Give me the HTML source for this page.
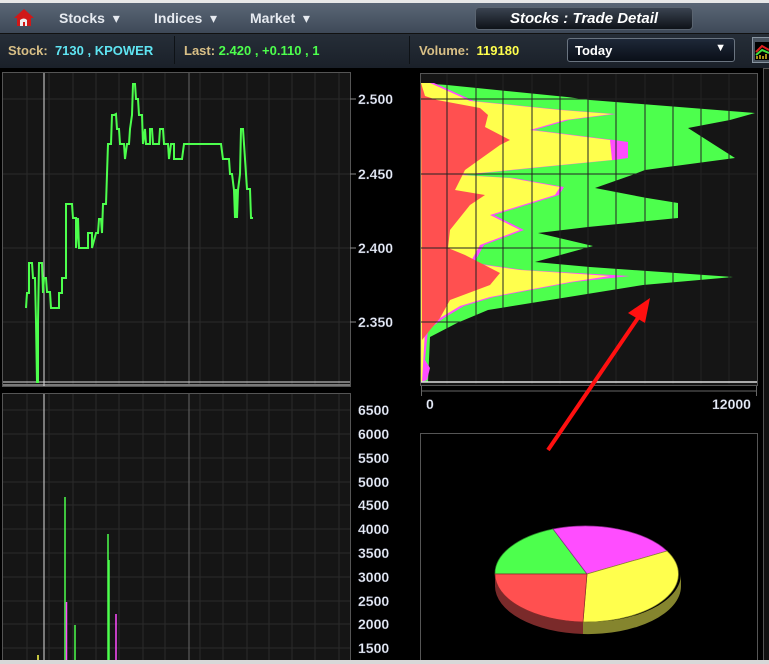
<!DOCTYPE html>
<html><head><meta charset="utf-8"><style>
*{margin:0;padding:0;box-sizing:border-box}
body{width:769px;height:664px;background:#000;position:relative;overflow:hidden;font-family:"Liberation Sans","DejaVu Sans",sans-serif;font-weight:bold}
.t{position:absolute;white-space:nowrap}
</style></head><body>
<div style="position:absolute;left:0;top:0;width:769px;height:3px;background:#e8e8e8"></div>
<div style="position:absolute;left:0;top:3px;width:769px;height:30px;background:linear-gradient(#5a6676,#3e4958)"></div>
<div style="position:absolute;left:0;top:33px;width:769px;height:35px;background:linear-gradient(#262e38,#1a2029);border-top:1px solid #111"></div>
<svg class="t" style="left:12px;top:6px" width="24" height="24" viewBox="0 0 24 24"><path d="M2 12 L12 3 L22 12 L19 12 L19 20 L5 20 L5 12Z" fill="#d01818"/><path d="M8 20 L8 14 Q12 11 15 14 L15 20" fill="#eee"/><path d="M12 20 L12 16" stroke="#d01818" stroke-width="2"/></svg>
<div class="t" style="left:59px;top:10px;font-size:14px;color:#e6eaf0">Stocks &nbsp;▾</div>
<div class="t" style="left:154px;top:10px;font-size:14px;color:#e6eaf0">Indices &nbsp;▾</div>
<div class="t" style="left:250px;top:10px;font-size:14px;color:#e6eaf0">Market &nbsp;▾</div>
<div class="t" style="left:475px;top:7px;width:218px;height:23px;border-radius:4px;background:linear-gradient(#3a4350,#0e1218);border:1px solid #5a6470;color:#fff;font-style:italic;font-size:15px;text-align:center;line-height:21px">Stocks : Trade Detail</div>
<div class="t" style="left:8px;top:43px;font-size:13px;color:#d8bf86">Stock: <span style="color:#5fe4f2">&nbsp;7130 , KPOWER</span></div>
<div class="t" style="left:174px;top:36px;width:1px;height:28px;background:#0e1216"></div>
<div class="t" style="left:184px;top:43px;font-size:13px;color:#d8bf86">Last: <span style="color:#4dff4d">2.420 , +0.110 , 1</span></div>
<div class="t" style="left:409px;top:36px;width:1px;height:28px;background:#0e1216"></div>
<div class="t" style="left:419px;top:43px;font-size:13px;color:#d8bf86">Volume: &nbsp;<span style="color:#ffff4d">119180</span></div>
<div class="t" style="left:567px;top:38px;width:168px;height:24px;border-radius:3px;background:linear-gradient(#1e2838,#0a0f18);border:1px solid #6a7480;color:#fff;font-size:13px;padding:4px 7px">Today<span style="position:absolute;right:8px;top:3px;font-size:11px">▼</span></div>
<div class="t" style="left:752px;top:37px;width:20px;height:26px;background:#4a5460;border:1px solid #8894a0"><svg width="18" height="24"><rect x="2" y="4" width="16" height="18" fill="#000"/><path d="M3 14 L9 8 L16 12" stroke="#e02020" stroke-width="2" fill="none"/><path d="M3 17 L9 12 L16 15" stroke="#40e040" stroke-width="2" fill="none"/><path d="M4 21V18M7 21V17M10 21V18M13 21V16" stroke="#e0c020" stroke-width="1.5"/></svg></div>

<svg class="t" style="left:0;top:0" width="769" height="664">
<rect x="2.5" y="72.5" width="348" height="314" fill="#151515" stroke="#555"/>
<g stroke="#2a2a2a" stroke-width="1">
<path d="M27 73V384M49 73V384M73 73V384M96 73V384M119 73V384M143 73V384M165 73V384M200 73V384M223 73V384M247 73V384M269 73V384M292 73V384M315 73V384M339 73V384"/>
<path d="M3 99H350M3 174H350M3 248H350M3 322H350"/>
</g>
<path d="M189 73V384" stroke="#666"/>
<path d="M44 73V386" stroke="#ddd"/>
<path d="M3 382H350M3 385H350" stroke="#ddd"/>
<g stroke="#888"><path d="M350 99H356M350 174H356M350 248H356M350 322H356"/></g>
<polyline fill="none" stroke="#4dff4d" stroke-width="2" points="26,308 27,293 29,293 29,263 32,263 33,278 35,278 36,322 37,382 38,382 38,322 39,263 42,263 43,293 44,278 46,278 47,292 50,292 51,308 59,308 59,293 62,293 62,278 66,278 66,204 69,204 72,204 73,218 76,218 76,248 78,218 79,248 88,248 88,233 92,233 92,248 96,233 98,233 99,219 101,219 102,233 103,204 106,204 107,174 108,144 111,144 112,115 114,115 116,114 117,129 119,129 120,144 124,144 125,159 127,144 129,144 130,129 132,115 133,84 135,84 136,99 138,99 139,115 142,115 143,144 145,129 146,144 150,144 150,129 152,129 153,144 159,144 160,129 163,129 164,144 168,144 169,159 171,144 174,144 174,159 177,159 182,159 184,144 221,144 223,159 229,159 230,174 232,174 234,190 235,218 236,189 237,218 238,190 240,174 241,129 243,129 244,144 246,174 247,189 250,189 251,218 253,218"/>
<rect x="2.5" y="393.5" width="348" height="272" fill="#151515" stroke="#555"/>
<g stroke="#2a2a2a">
<path d="M27 394V664M49 394V664M73 394V664M96 394V664M119 394V664M143 394V664M165 394V664M200 394V664M223 394V664M247 394V664M269 394V664M292 394V664M315 394V664M339 394V664"/>
<path d="M3 410H350M3 434H350M3 458H350M3 482H350M3 505H350M3 529H350M3 553H350M3 577H350M3 601H350M3 624H350M3 648H350"/>
</g>
<path d="M189 394V664" stroke="#666"/>
<path d="M44 394V664" stroke="#ddd"/>
<g stroke-width="1.5"><path d="M65 497V664M75 625V664M108 534V664M109 560V664" stroke="#4dff4d"/><path d="M66.5 602V664M116 614V664" stroke="#ff4dff"/><path d="M38 655V664" stroke="#ffff4d"/></g>
<g fill="#e8eef8" font-size="14" font-family="Liberation Sans,sans-serif" font-weight="bold" stroke="#445" stroke-width="0.3">
<text x="358" y="104">2.500</text><text x="358" y="179">2.450</text><text x="358" y="253">2.400</text><text x="358" y="327">2.350</text>
<text x="358" y="415">6500</text><text x="358" y="439">6000</text><text x="358" y="463">5500</text><text x="358" y="487">5000</text><text x="358" y="510">4500</text><text x="358" y="534">4000</text><text x="358" y="558">3500</text><text x="358" y="582">3000</text><text x="358" y="606">2500</text><text x="358" y="629">2000</text><text x="358" y="653">1500</text>
<text x="426" y="409">0</text><text x="712" y="409">12000</text>
</g>
<rect x="420.5" y="73.5" width="337" height="312" fill="#151515" stroke="#555"/>
<polygon fill="#4dff4d" points="421,83 447,85 567,97 590,100 755,113 730,120 688,128 735,158 645,170 632,175 595,188 647,198 678,203 678,218 588,227 538,233 593,246 535,262 590,267 733,277 643,285 488,310 457,323 430,337 428,382 421,382"/>
<polygon fill="#ff4dff" points="434,83 474,101 564,110 616,114 569,120 534,130 614,140 628,142 628,158 614,160 534,168 464,175 514,178 564,187 559,195 494,215 524,230 484,245 474,263 524,270 630,276 574,282 494,297 464,306 444,318 428,330 425,360 430,368 427,380 421,382 421,83"/>
<polygon fill="#ffff4d" points="430,83 470,101 560,110 612,114 565,120 530,130 610,140 612,160 530,168 460,175 510,178 560,187 555,195 490,215 520,230 480,245 470,263 520,270 610,276 570,282 490,297 460,306 440,318 425,330 422,382 421,382 421,83"/>
<polygon fill="#ff5050" points="421,83 425,96 437,100 480,108 488,115 485,127 510,140 500,145 465,170 455,190 485,195 470,205 450,230 448,248 465,255 500,273 490,285 450,300 440,318 430,330 422,340"/>
<g stroke="#222" stroke-width="1">
<path d="M447 74V384M476 74V384M503 74V384M532 74V384M560 74V384M588 74V384M616 74V384M645 74V384M673 74V384M701 74V384M729 74V384"/>
<path d="M421 99H757M421 174H757M421 248H757M421 322H757"/>
</g>
<path d="M421 382H757" stroke="#ddd" stroke-width="1.5"/>
<path d="M421 391H757" stroke="#666"/>
<path d="M421.5 386V396M756.5 386V396" stroke="#666"/>
<rect x="763.5" y="68.5" width="10" height="600" fill="#111" stroke="#555"/>
<rect x="420.5" y="433.5" width="337" height="240" fill="#000" stroke="#555"/>
<path d="M495,574 A93,48 0 0 0 583,622 L583,634 A93,48 0 0 1 495,586 Z" fill="#7a2a2a"/>
<path d="M583,622 A93,48 0 0 0 681,574 L681,586 A93,48 0 0 1 583,634 Z" fill="#85852e"/>
<path d="M587,574 L495,574 A93,48 0 0 1 553,529 Z" fill="#4dff4d" stroke="#2a8a2a" stroke-width="0.7"/>
<path d="M587,574 L553,529 A93,48 0 0 1 667,551 Z" fill="#ff4dff" stroke="#8a2a8a" stroke-width="0.7"/>
<path d="M587,574 L667,551 A93,48 0 0 1 583,622 Z" fill="#ffff4d" stroke="#8a8a2a" stroke-width="0.7"/>
<path d="M587,574 L583,622 A93,48 0 0 1 495,574 Z" fill="#ff5050" stroke="#8a2a2a" stroke-width="0.7"/>
<rect x="0" y="660" width="769" height="4" fill="#d8d8d8"/>
<path d="M548 450 L640 315" stroke="#ff1010" stroke-width="4"/>
<polygon points="650,298 628,313 645,323" fill="#ff1010"/>
</svg>
</body></html>
